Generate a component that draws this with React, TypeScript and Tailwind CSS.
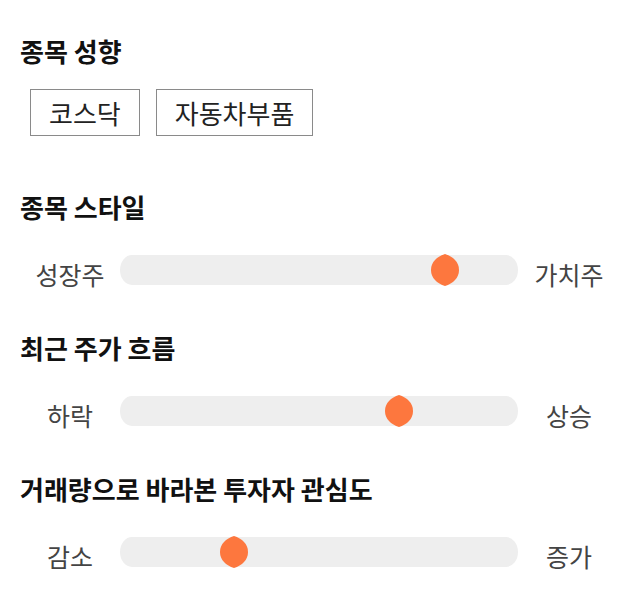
const font = { fontFamily: '"Noto Sans CJK KR", "Noto Sans", sans-serif' };

const tags = ["코스닥", "자동차부품"];

const sliders = [
  { title: "종목 스타일", left: "성장주", right: "가치주", value: 0.817 },
  { title: "최근 주가 흐름", left: "하락", right: "상승", value: 0.7 },
  { title: "거래량으로 바라본 투자자 관심도", left: "감소", right: "증가", value: 0.286 },
];

function Thumb({ value }: { value: number }) {
  return (
    <svg
      width="28"
      height="32"
      viewBox="0 0 28 32"
      className="absolute top-1/2 -translate-x-1/2 -translate-y-1/2"
      style={{ left: `${value * 100}%` }}
    >
      <path
        d="M14 0C22 2.5 28 8 28 16C28 24 22 29.5 14 32C6 29.5 0 24 0 16C0 8 6 2.5 14 0Z"
        fill="#fd773e"
      />
    </svg>
  );
}

function SliderRow({ left, right, value }: { left: string; right: string; value: number }) {
  return (
    <div className="mt-[31px] flex h-8 items-center">
      <span className="w-[100px] translate-y-1 text-center text-[25px] leading-8 text-[#444]">{left}</span>
      <div className="relative h-[30px] w-[398px] rounded-[12px/15px] bg-[#eeeeee]">
        <Thumb value={value} />
      </div>
      <span className="flex-1 translate-y-1 text-center text-[25px] leading-8 text-[#444]">{right}</span>
    </div>
  );
}

export default function App() {
  return (
    <div className="min-h-screen w-[640px] bg-white px-5 pt-[35px]" style={font}>
      <h2 className="text-[26px] font-bold leading-8 text-[#111]">종목 성향</h2>
      <div className="ml-2.5 mt-[22px] flex gap-4">
        {tags.map((tag) => (
          <span
            key={tag}
            className="flex h-[47px] items-center border border-[#8a8a8a] px-[18px] text-[26px] text-[#222]"
          >
            {tag}
          </span>
        ))}
      </div>
      {sliders.map((s, i) => (
        <section key={s.title} className={i === 0 ? "mt-[55px]" : "mt-[46px]"}>
          <h2 className="text-[26px] font-bold leading-8 text-[#111]">{s.title}</h2>
          <SliderRow left={s.left} right={s.right} value={s.value} />
        </section>
      ))}
    </div>
  );
}
